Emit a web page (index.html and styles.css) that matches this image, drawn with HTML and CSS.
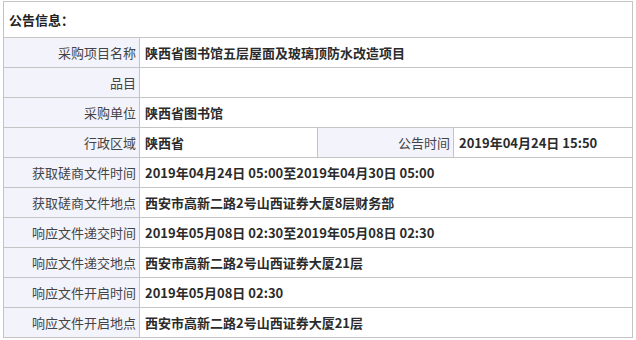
FILE: index.html
```html
<!DOCTYPE html>
<html lang="zh-CN">
<head>
<meta charset="utf-8">
<link rel="stylesheet" href="styles.css">
</head>
<body>
<table class="info">
  <colgroup>
    <col class="c-label">
    <col class="c-val">
    <col class="c-label2">
    <col class="c-val2">
  </colgroup>
  <tr class="head"><td colspan="4">公告信息：</td></tr>
  <tr><th>采购项目名称</th><td colspan="3">陕西省图书馆五层屋面及玻璃顶防水改造项目</td></tr>
  <tr><th>品目</th><td colspan="3"></td></tr>
  <tr><th>采购单位</th><td colspan="3">陕西省图书馆</td></tr>
  <tr><th>行政区域</th><td>陕西省</td><th>公告时间</th><td>2019年04月24日 15:50</td></tr>
  <tr><th>获取磋商文件时间</th><td colspan="3">2019年04月24日 05:00至2019年04月30日 05:00</td></tr>
  <tr><th>获取磋商文件地点</th><td colspan="3">西安市高新二路2号山西证券大厦8层财务部</td></tr>
  <tr><th>响应文件递交时间</th><td colspan="3">2019年05月08日 02:30至2019年05月08日 02:30</td></tr>
  <tr><th>响应文件递交地点</th><td colspan="3">西安市高新二路2号山西证券大厦21层</td></tr>
  <tr><th>响应文件开启时间</th><td colspan="3">2019年05月08日 02:30</td></tr>
  <tr><th>响应文件开启地点</th><td colspan="3">西安市高新二路2号山西证券大厦21层</td></tr>
</table>
</body>
</html>
```
FILE: styles.css
```css
html, body {
  margin: 0;
  padding: 0;
  background: #ffffff;
}
body {
  padding: 1px 0 0 3px;
  font-family: "Noto Sans CJK SC", "Noto Sans", sans-serif;
  font-size: 13px;
  color: #333333;
}
.info {
  border-collapse: collapse;
  width: 630px;
  table-layout: fixed;
}
.c-label { width: 136px; }
.c-val { width: 178px; }
.c-label2 { width: 136px; }
.c-val2 { width: auto; }
.info th, .info td {
  border: 1px solid #c4c4c4;
  height: 29px;
  padding: 0;
  line-height: 16px;
  white-space: nowrap;
}
.info th {
  background: #f3f3fc;
  text-align: right;
  font-weight: normal;
  color: #444444;
  padding-right: 3px;
}
.info td {
  text-align: left;
  font-weight: bold;
  color: #2b2b2b;
  padding-left: 5px;
}
.info .head td {
  height: 35px;
  padding-left: 5px;
  font-weight: bold;
  color: #222222;
}
```
